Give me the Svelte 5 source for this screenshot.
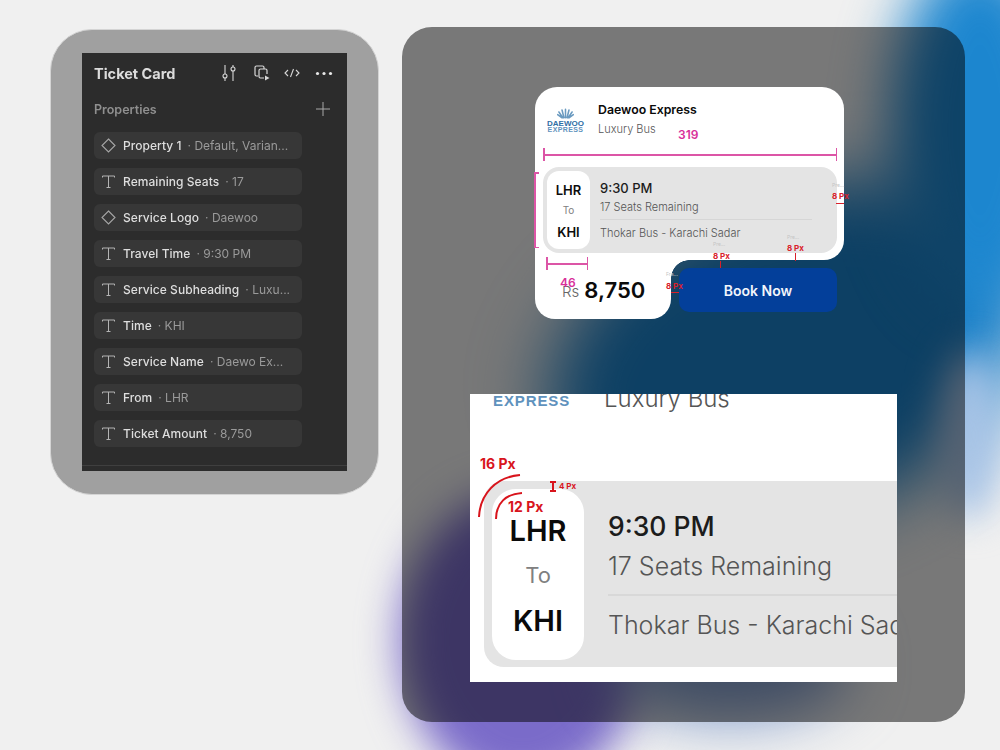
<script>
  const rows = [
    { icon: 'd', name: 'Property 1', value: 'Default, Varian...' },
    { icon: 't', name: 'Remaining Seats', value: '17' },
    { icon: 'd', name: 'Service Logo', value: 'Daewoo' },
    { icon: 't', name: 'Travel Time', value: '9:30 PM' },
    { icon: 't', name: 'Service Subheading', value: 'Luxu...' },
    { icon: 't', name: 'Time', value: 'KHI' },
    { icon: 't', name: 'Service Name', value: 'Daewo Ex...' },
    { icon: 't', name: 'From', value: 'LHR' },
    { icon: 't', name: 'Ticket Amount', value: '8,750' }
  ];
</script>

<div class="page">
  <div class="blobs" aria-hidden="true">
    <i class="blob b1"></i>
    <i class="blob b2"></i>
    <i class="blob b3"></i>
    <i class="blob b4"></i>
    <i class="blob b5"></i>
  </div>

  <section class="figma-card">
    <div class="figma">
      <header class="fhead">
        <h2>Ticket Card</h2>
        <div class="ftools">
          <svg width="16" height="18" viewBox="0 0 16 18" fill="none" stroke="#d8d8d8" stroke-width="1.1">
            <path d="M4 1v9M4 14v3M12 1v2M12 7v10" />
            <circle cx="4" cy="12" r="2" /><circle cx="12" cy="5" r="2" />
          </svg>
          <svg class="fcopy" width="17" height="17" viewBox="0 0 17 17" fill="none" stroke="#d8d8d8" stroke-width="1.2">
            <path d="M4 11H2.500A1.500 1.500 0 0 1 1 9.500V2.500A1.500 1.500 0 0 1 2.500 1h6A1.500 1.500 0 0 1 10 2.500V4" />
            <path d="M10 13H6.500A1.500 1.500 0 0 1 5 11.500V5.500A1.500 1.500 0 0 1 6.500 4h5A1.500 1.500 0 0 1 13 5.500V9" />
            <path d="M11 10.500v5l4.500-2.500z" fill="#d8d8d8" stroke="none" />
          </svg>
          <svg width="16" height="12" viewBox="0 0 16 12" fill="none" stroke="#d8d8d8" stroke-width="1.1">
            <path d="M4 3 1 6l3 3M12 3l3 3-3 3M9.500 2l-3 8" />
          </svg>
          <svg width="18" height="5" viewBox="0 0 18 5" fill="#e8e8e8">
            <circle cx="2.500" cy="2.500" r="1.600" /><circle cx="9" cy="2.500" r="1.600" /><circle cx="15.500" cy="2.500" r="1.600" />
          </svg>
        </div>
      </header>
      <div class="fprops">
        <h3>Properties</h3>
        <svg width="14" height="14" viewBox="0 0 14 14" stroke="#a8a8a8" stroke-width="1"><path d="M7 0v14M0 7h14" /></svg>
      </div>
      <ul class="frows">
        {#each rows as r}
          <li>
            {#if r.icon === 'd'}
              <svg class="ficon" width="15" height="15" viewBox="0 0 15 15" fill="none" stroke="#a6a6a6" stroke-width="1.1"><path d="M7.500 1 14 7.500 7.500 14 1 7.500z" /></svg>
            {:else}
              <svg class="ficon" width="15" height="15" viewBox="0 0 15 15" fill="none" stroke="#b4b4b4" stroke-width="1"><path d="M1.500 3.500V2h12v1.500M7.500 2v11.500M5.500 13.500h4" /></svg>
            {/if}
            <span class="fname">{r.name}</span><span class="fval">· {r.value}</span>
          </li>
        {/each}
      </ul>
      <div class="frule"></div>
    </div>
  </section>

  <section class="stage">
    <article class="ticket">
      <div class="ttop">
        <div class="thead">
          <div class="logo">
            <svg width="17" height="13" viewBox="0 0 22 13" fill="none" stroke="#6a9ac0" stroke-width="2" stroke-linecap="round">
              <path d="M11 12V1M9 12 6.500 2M13 12l2.500-10M7.500 12 2.500 4.500M14.500 12l5-7.500M6.500 12 .8 8M15.500 12l5.700-4" />
            </svg>
            <b>DAEWOO</b><em>EXPRESS</em>
          </div>
          <div class="ttitle">
            <strong>Daewoo Express</strong>
            <span>Luxury Bus</span>
          </div>
        </div>
        <div class="route">
          <div class="pill"><b>LHR</b><span>To</span><b>KHI</b></div>
          <div class="rinfo">
            <strong>9:30 PM</strong>
            <span>17 Seats Remaining</span>
            <hr />
            <span>Thokar Bus - Karachi Sadar</span>
          </div>
        </div>
        <i class="notch"></i>
      </div>
      <div class="tbottom">
        <div class="price"><span>Rs</span><strong>8,750</strong></div>
        <button>Book Now</button>
      </div>

      <i class="m hl w319"></i><span class="mt t319">319</span>
      <i class="m vl h-route"></i>
      <i class="m hl w46"></i><span class="mt t46">46</span>
      <span class="r r1">8 Px</span><i class="rb rb1"></i>
      <span class="r r2">8 Px</span><i class="rb rb2"></i>
      <span class="r r3">8 Px</span><i class="rb rb3"></i>
      <span class="r r4">8 Px</span><i class="rb rb4"></i>
      <span class="tiny f1">Fra...</span>
      <span class="tiny f2">Pre...</span>
      <span class="tiny f3">Pre...</span>
      <span class="tiny f4">Pre...</span>
    </article>

    <div class="zoomed">
      <div class="ztop">
        <b>EXPRESS</b><span>Luxury Bus</span>
      </div>
      <div class="zroute">
        <div class="zpill"><b>LHR</b><span>To</span><b>KHI</b></div>
        <div class="zinfo">
          <strong>9:30 PM</strong>
          <span>17 Seats Remaining</span>
          <hr />
          <span>Thokar Bus - Karachi Sadar</span>
        </div>
      </div>
      <span class="zl z16">16 Px</span>
      <span class="zl z12">12 Px</span>
      <span class="zl z4">4 Px</span>
      <svg class="zarcs" width="100" height="70" viewBox="0 0 100 70" fill="none" stroke="#d8141c" stroke-width="2">
        <path d="M9 47C10 24 26 7 50 5" />
        <path d="M26 49C26 33 36 24 52 23" />
        <path d="M80 12h6M83 12v9M80 21h6" />
      </svg>
    </div>
  </section>
</div>

<style>
  :global(body) { margin: 0; }
  * { box-sizing: border-box; }
  .page {
    position: relative;
    width: 1000px;
    height: 750px;
    overflow: hidden;
    display: flex;
    align-items: flex-start;
    gap: 23px;
    padding: 27px 0 0 50px;
    background: #f0f0f0;
    font-family: Inter, "Liberation Sans", sans-serif;
  }
  .blobs { position: absolute; inset: 0; }
  .blob { position: absolute; display: block; border-radius: 50%; }
  .b1 { left: 540px; top: 190px; width: 500px; height: 330px; background: #1a80c8; filter: blur(35px); transform: rotate(-20deg); }
  .b2 { left: 890px; top: -50px; width: 180px; height: 360px; background: #1c86cf; filter: blur(28px); }
  .b3 { left: 400px; top: 490px; width: 245px; height: 300px; background: #7a6bc9; filter: blur(20px); }
  .b4 { left: 610px; top: 610px; width: 240px; height: 110px; background: #7f9aca; filter: blur(28px); }
  .b5 { left: 940px; top: 350px; width: 60px; height: 170px; background: #a9c4e6; filter: blur(18px); }

  .figma-card {
    position: relative;
    margin-top: 2px;
    width: 329px;
    height: 466px;
    padding: 24px 32px;
    background: #a0a0a0;
    border-radius: 42px;
    border: 1px solid #d4d4d4;
  }
  .figma {
    width: 265px;
    height: 418px;
    margin-left: -1px;
    margin-top: -1px;
    background: #2c2c2c;
    color: #e8e8e8;
    padding: 0 14px 0 12px;
    display: flex;
    flex-direction: column;
    filter: blur(0.3px);
  }
  .fhead { display: flex; align-items: center; justify-content: space-between; height: 40px; }
  .fhead h2 { margin: 0; font-size: 14.500px; font-weight: 700; color: #dcdcdc; }
  .ftools { display: flex; align-items: center; gap: 15px; }
  .fcopy { margin: 0 -2px 0 2px; }
  .fprops { display: flex; align-items: center; justify-content: space-between; height: 14px; margin-top: 9px; padding-right: 3px; }
  .fprops h3 { margin: 0; font-size: 12.500px; font-weight: 600; color: #8f8f8f; }
  .frows { list-style: none; margin: 16px 0 0; padding: 0; display: flex; flex-direction: column; gap: 9px; }
  .frows li {
    width: 208px;
    height: 27px;
    background: #373737;
    border-radius: 6px;
    padding-left: 7px;
    display: flex;
    align-items: center;
    font-size: 12px;
    white-space: nowrap;
  }
  .ficon { flex: none; margin-right: 7px; }
  .fname { color: #dedede; font-weight: 500; margin-right: 6px; letter-spacing: 0.05px; }
  .fval { color: #9a9a9a; }
  .frule { height: 1px; background: #3f3f3f; margin: 18px -14px 0 -12px; }

  .stage {
    position: relative;
    width: 563px;
    height: 695px;
    border-radius: 30px;
    background: rgba(0, 0, 0, 0.5);
    padding-top: 60px;
    display: flex;
    flex-direction: column;
  }

  .ticket {
    position: relative;
    width: 309px;
    margin-left: 133px;
    color: #111;
    font-family: Inter, sans-serif;
  }
  .ttop {
    position: relative;
    height: 173px;
    background: #fff;
    border-radius: 22px 22px 20px 0;
    padding: 0 7px 0 8px;
  }
  .thead { display: flex; height: 80px; padding: 16px 0 0 4px; }
  .logo { width: 51px; display: flex; flex-direction: column; align-items: center; padding-right: 14px; padding-top: 4px; line-height: 6px; color: #2f6ea5; }
  .logo svg { margin-bottom: 1px; }
  .logo b { font: 700 8px/6px "Liberation Sans", sans-serif; }
  .logo em { font: 700 7px/6px "Liberation Sans", sans-serif; color: #5f92bd; letter-spacing: 0.4px; }
  .ttitle { display: flex; flex-direction: column; margin-top: -1px; margin-left: 0; }
  .ttitle strong { font-size: 12.300px; font-weight: 600; line-height: 16px; color: #0a0a0a; }
  .ttitle span { font-size: 11px; font-weight: 300; line-height: 14px; margin-top: 4px; color: #555; }
  .route {
    display: flex;
    height: 86px;
    background: #e4e4e4;
    border-radius: 16px;
    padding: 4px;
  }
  .pill {
    width: 43px;
    height: 78px;
    background: #fff;
    border-radius: 12px;
    display: flex;
    flex-direction: column;
    align-items: center;
    padding-top: 11px;
  }
  .pill b { font-size: 13px; font-weight: 600; color: #0c0c0c; line-height: 16px; }
  .pill span { font-size: 10px; font-weight: 400; color: #808080; line-height: 14px; margin: 5px 0 7px; }
  .rinfo { display: flex; flex-direction: column; margin-left: 10px; width: 212px; color: #555; font-size: 11px; font-weight: 300; }
  .rinfo strong { font-size: 13px; font-weight: 500; color: #1c1c1c; line-height: 16px; margin-top: 9px; }
  .rinfo span { line-height: 14px; }
  .rinfo strong + span { margin-top: 4px; }
  .rinfo hr { border: 0; height: 1px; background: #d6d6d6; margin: 5px 0 6px; width: 212px; }
  .notch {
    position: absolute;
    left: 136px;
    top: 173px;
    width: 18px;
    height: 18px;
    background: radial-gradient(circle at 100% 100%, transparent 17.500px, #fff 18px);
  }
  .tbottom { display: flex; }
  .price {
    width: 136px;
    height: 59px;
    background: #fff;
    border-radius: 0 0 20px 20px;
    display: flex;
    align-items: center;
    padding: 0 0 0 27px;
    gap: 5px;
  }
  .price span { font-size: 15px; font-weight: 300; color: #666; margin-top: 4px; }
  .price strong { font-size: 22px; font-weight: 600; color: #0b0b0b; }
  button {
    margin: 8px 0 0 8px;
    width: 158px;
    height: 44px;
    border: 0;
    border-radius: 10px;
    background: #033f9a;
    color: #f2f5fb;
    font: 600 14px Inter, sans-serif;
  }

  .m { position: absolute; display: block; background: #dc55a6; }
  .hl { height: 1.500px; }
  .w319 { left: 8px; top: 67px; width: 294px; }
  .w319::before, .w319::after, .w46::before, .w46::after { content: ""; position: absolute; top: -6px; width: 1.500px; height: 13px; background: #dc55a6; }
  .w319::before, .w46::before { left: 0; }
  .w319::after, .w46::after { right: 0; }
  .vl { width: 1.500px; }
  .h-route { left: -1px; top: 85px; height: 76px; }
  .h-route::before, .h-route::after { content: ""; position: absolute; left: 0; width: 5px; height: 1.500px; background: #dc55a6; }
  .h-route::before { top: 0; }
  .h-route::after { bottom: 0; }
  .w46 { left: 11px; top: 176px; width: 42px; }
  .mt { position: absolute; color: #d8309a; font-size: 12px; font-weight: 600; line-height: 14px; }
  .t319 { left: 143px; top: 41px; }
  .t46 { left: 25px; top: 189px; }
  .r { position: absolute; color: #d9202a; font-size: 8px; font-weight: 700; line-height: 8px; white-space: nowrap; }
  .rb { position: absolute; display: block; background: #d9202a; }
  .r1 { left: 297px; top: 105px; }
  .rb1 { left: 301px; top: 116px; width: 8px; height: 1px; }
  .r2 { left: 252px; top: 157px; }
  .rb2 { left: 260px; top: 166px; width: 1px; height: 8px; }
  .r3 { left: 178px; top: 165px; }
  .rb3 { left: 185px; top: 174px; width: 1px; height: 7px; }
  .r4 { left: 131px; top: 195px; }
  .rb4 { left: 136px; top: 205px; width: 8px; height: 1px; }
  .tiny { position: absolute; color: #c4c4c4; font-size: 5px; line-height: 6px; white-space: nowrap; }
  .f1 { left: 131px; top: 184px; }
  .f2 { left: 178px; top: 154px; }
  .f3 { left: 252px; top: 147px; }
  .f4 { left: 297px; top: 95px; }

  .zoomed {
    position: relative;
    width: 427px;
    height: 288px;
    margin: 75px 0 0 68px;
    background: #fff;
    overflow: hidden;
    font-family: Inter, sans-serif;
  }
  .ztop { position: relative; height: 87px; }
  .ztop b { position: absolute; left: 23px; top: 0; font: 700 15px/14px "Liberation Sans", sans-serif; color: #5f92bd; letter-spacing: 0.9px; }
  .ztop span { position: absolute; left: 134px; top: -10px; font-size: 24px; font-weight: 300; color: #555; line-height: 30px; white-space: nowrap; }
  .zroute {
    display: flex;
    margin-left: 14px;
    width: 500px;
    height: 186px;
    background: #e4e4e4;
    border-radius: 20px;
    padding: 8px;
  }
  .zpill {
    width: 92px;
    height: 171px;
    background: #fff;
    border-radius: 24px;
    display: flex;
    flex-direction: column;
    align-items: center;
    padding-top: 17px;
  }
  .zpill b { font-size: 29px; font-weight: 600; color: #0a0a0a; line-height: 50px; }
  .zpill span { font-size: 22px; color: #808080; line-height: 40px; margin: -1px 0 1px; }
  .zinfo { display: flex; flex-direction: column; margin-left: 24px; font-weight: 300; font-size: 25px; color: #555; white-space: nowrap; }
  .zinfo strong { font-size: 26.500px; font-weight: 500; color: #1c1c1c; line-height: 32px; margin-top: 21px; }
  .zinfo span { line-height: 32px; }
  .zinfo strong + span { margin-top: 8px; }
  .zinfo hr { border: 0; height: 2px; background: #d8d8d8; margin: 12px 0 13px; width: 320px; }
  .zl { position: absolute; color: #d8141c; font-weight: 700; white-space: nowrap; }
  .z16 { left: 10px; top: 61px; font-size: 14px; line-height: 18px; }
  .z12 { left: 38px; top: 104px; font-size: 14px; line-height: 18px; }
  .z4 { left: 89px; top: 87px; font-size: 8px; line-height: 10px; }
  .zarcs { position: absolute; left: 0; top: 76px; }
</style>
